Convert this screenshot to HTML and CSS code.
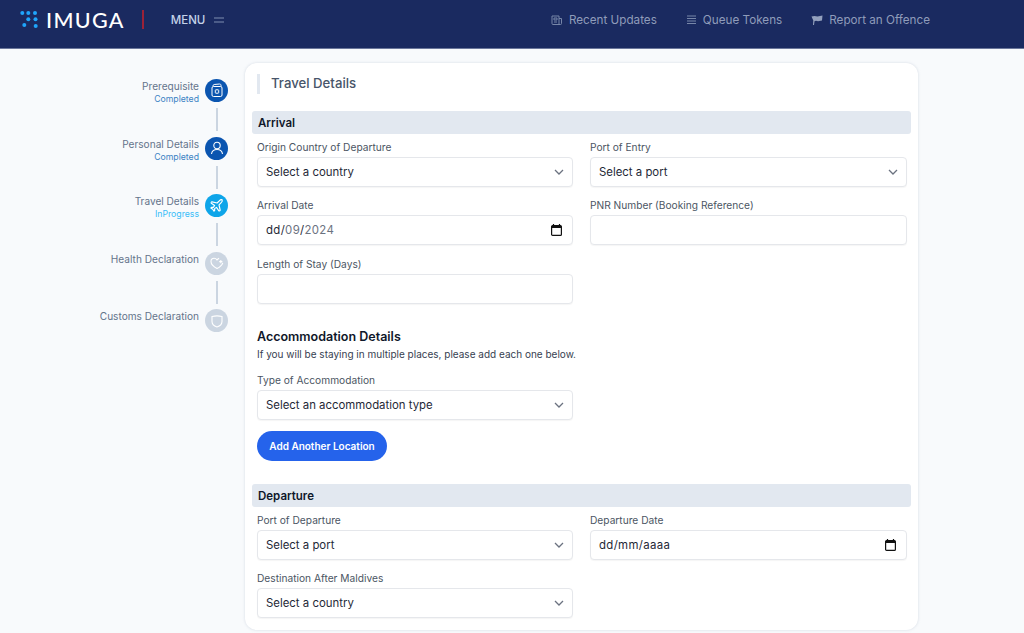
FILE: index.html
```html
<!DOCTYPE html>
<html lang="en">
<head>
    <meta charset="UTF-8">
    <title>IMUGA - Travel Details</title>
    <link rel="stylesheet" href="styles.css">
</head>
<body>
    <header class="topbar">
        <div class="brand">
            <svg class="brand-dots" width="20" height="18" viewBox="0 0 20 18">
                <g fill="#1fa5fb">
                    <circle cx="2.300" cy="2" r="2"/><circle cx="8.300" cy="2" r="2"/><circle cx="15" cy="2" r="2"/>
                    <circle cx="8.300" cy="8.300" r="2"/><circle cx="15.500" cy="8.300" r="2"/>
                    <circle cx="4.300" cy="14" r="2"/><circle cx="15.700" cy="15" r="2"/>
                </g>
            </svg>
            <span class="brand-name">IMUGA</span>
        </div>
        <div class="brand-line"></div>
        <div class="menu-btn">
            <span>MENU</span>
            <svg width="10" height="6" viewBox="0 0 10 6"><path d="M0 1h10M0 5h10" stroke="#7f8db0" stroke-width="1.200"/></svg>
        </div>
        <nav class="top-links">
            <a href="#">
                <svg width="12" height="12" viewBox="0 0 12 12" fill="none" stroke="#7786a8"><path d="M1 2h7v8.500H2a1 1 0 0 1-1-1zM8 4.500h2.500v5a1 1 0 0 1-1 1H8M3 4h3v2H3zM3 8h3"/></svg>
                Recent Updates
            </a>
            <a href="#">
                <svg width="11" height="12" viewBox="0 0 11 12" fill="none" stroke="#7786a8"><path d="M1 2h9M1 4.500h9M1 7h9M1 9.500h9"/></svg>
                Queue Tokens
            </a>
            <a href="#">
                <svg width="12" height="12" viewBox="0 0 12 12" fill="#93a0bd"><path d="M.5 2.500l3-.5 3 .5 5-1-.5 5-4 .8-2-.5-1.500.5L3 11H2L2.300 6.500z"/></svg>
                Report an Offence
            </a>
        </nav>
    </header>

    <main class="page">
        <aside class="steps">
            <div class="step done">
                <div class="step-text"><div class="step-name">Prerequisite</div><div class="step-status">Completed</div></div>
                <div class="step-icon">
                    <svg width="14" height="15" viewBox="0 0 14 15" fill="none" stroke="#fff" stroke-width="1"><path d="M3 3.500V2.800c0-.7.500-1.200 1.200-1.300L9.500 1c.8-.1 1.500.5 1.500 1.300v1.200"/><rect x="2" y="3.500" width="10" height="10" rx="1.500"/><rect x="5.300" y="6.800" width="3.400" height="3.400" rx=".6"/></svg>
                </div>
            </div>
            <div class="step-line"></div>
            <div class="step done">
                <div class="step-text"><div class="step-name">Personal Details</div><div class="step-status">Completed</div></div>
                <div class="step-icon">
                    <svg width="14" height="14" viewBox="0 0 14 14" fill="none" stroke="#fff" stroke-width="1.100"><circle cx="7" cy="4.500" r="3.200"/><path d="M1.500 13c.4-3 2.500-4.500 5.500-4.500s5.100 1.500 5.500 4.500"/></svg>
                </div>
            </div>
            <div class="step-line"></div>
            <div class="step current">
                <div class="step-text"><div class="step-name">Travel Details</div><div class="step-status">InProgress</div></div>
                <div class="step-icon">
                    <svg width="15" height="15" viewBox="0 0 24 24" fill="none" stroke="#fff" stroke-width="1.900" stroke-linejoin="round"><path d="M17.800 19.200 16 11l3.500-3.500C21 6 21.500 4 21 3c-1-.5-3 0-4.500 1.500L13 8 4.800 6.200c-.5-.1-.9.1-1.100.5l-.3.5c-.2.500-.1 1 .3 1.300L9 12l-2 3H4l-1 1 3 2 2 3 1-1v-3l3-2 3.500 5.300c.3.400.8.500 1.300.3l.5-.2c.4-.3.6-.7.5-1.200z"/></svg>
                </div>
            </div>
            <div class="step-line"></div>
            <div class="step">
                <div class="step-text"><div class="step-name">Health Declaration</div></div>
                <div class="step-icon">
                    <svg width="14" height="14" viewBox="0 0 14 14" fill="none" stroke="#fff" stroke-width="1.100"><path d="M12.800 6.800C12 9.200 9.900 11 7 12.500 3.600 10.700 1 8.500 1 5.500 1 3.700 2.400 2.300 4.100 2.300c1.200 0 2.200.6 2.900 1.700.5-.8 1.200-1.400 2.100-1.600M10.800 4v3.200M9.200 5.600h3.200"/></svg>
                </div>
            </div>
            <div class="step-line"></div>
            <div class="step">
                <div class="step-text"><div class="step-name">Customs Declaration</div></div>
                <div class="step-icon">
                    <svg width="14" height="14" viewBox="0 0 14 14" fill="none" stroke="#fff" stroke-width="1.100"><path d="M2 2.500c3.300-.8 6.700-.8 10 0v5c0 2.800-2.200 4.600-5 5.500-2.800-.9-5-2.700-5-5.500z"/></svg>
                </div>
            </div>
        </aside>

        <section class="card">
            <h1 class="card-title">Travel Details</h1>

            <h2 class="section-bar">Arrival</h2>
            <div class="form-grid">
                <div class="field">
                    <label>Origin Country of Departure</label>
                    <div class="select-box"><span>Select a country</span><svg class="chev" width="10" height="6" viewBox="0 0 10 6"><path d="M1 1l4 4 4-4" fill="none" stroke="#6b7280" stroke-width="1.300"/></svg></div>
                </div>
                <div class="field">
                    <label>Port of Entry</label>
                    <div class="select-box"><span>Select a port</span><svg class="chev" width="10" height="6" viewBox="0 0 10 6"><path d="M1 1l4 4 4-4" fill="none" stroke="#6b7280" stroke-width="1.300"/></svg></div>
                </div>
                <div class="field">
                    <label>Arrival Date</label>
                    <div class="select-box date"><span>dd/<em>09</em>/<em>2024</em></span><svg class="cal" width="11" height="12" viewBox="0 0 11 12"><path d="M2.500 0v2M8.500 0v2" stroke="#111" stroke-width="1.200"/><rect x=".6" y="1.600" width="9.800" height="9.800" rx="1" fill="none" stroke="#111" stroke-width="1.200"/><rect x="1" y="1.500" width="9" height="2.500" fill="#111"/></svg></div>
                </div>
                <div class="field">
                    <label>PNR Number (Booking Reference)</label>
                    <input class="text-box" type="text">
                </div>
                <div class="field">
                    <label>Length of Stay (Days)</label>
                    <input class="text-box" type="text">
                </div>
            </div>

            <div class="accom">
                <h3>Accommodation Details</h3>
                <p>If you will be staying in multiple places, please add each one below.</p>
                <div class="form-grid">
                    <div class="field">
                        <label>Type of Accommodation</label>
                        <div class="select-box"><span>Select an accommodation type</span><svg class="chev" width="10" height="6" viewBox="0 0 10 6"><path d="M1 1l4 4 4-4" fill="none" stroke="#6b7280" stroke-width="1.300"/></svg></div>
                    </div>
                </div>
                <button class="add-btn" type="button">Add Another Location</button>
            </div>

            <h2 class="section-bar">Departure</h2>
            <div class="form-grid">
                <div class="field">
                    <label>Port of Departure</label>
                    <div class="select-box"><span>Select a port</span><svg class="chev" width="10" height="6" viewBox="0 0 10 6"><path d="M1 1l4 4 4-4" fill="none" stroke="#6b7280" stroke-width="1.300"/></svg></div>
                </div>
                <div class="field">
                    <label>Departure Date</label>
                    <div class="select-box date"><span>dd/mm/aaaa</span><svg class="cal" width="11" height="12" viewBox="0 0 11 12"><path d="M2.500 0v2M8.500 0v2" stroke="#111" stroke-width="1.200"/><rect x=".6" y="1.600" width="9.800" height="9.800" rx="1" fill="none" stroke="#111" stroke-width="1.200"/><rect x="1" y="1.500" width="9" height="2.500" fill="#111"/></svg></div>
                </div>
                <div class="field">
                    <label>Destination After Maldives</label>
                    <div class="select-box"><span>Select a country</span><svg class="chev" width="10" height="6" viewBox="0 0 10 6"><path d="M1 1l4 4 4-4" fill="none" stroke="#6b7280" stroke-width="1.300"/></svg></div>
                </div>
            </div>
        </section>
    </main>
</body>
</html>
```

FILE: styles.css
```css
* {
    box-sizing: border-box;
}
body, html {
    margin: 0;
    padding: 0;
    height: 100%;
    background-color: #f8fafc;
    font-family: 'Inter', sans-serif;
    overflow: hidden;
}

/* top bar */
.topbar {
    display: flex;
    align-items: center;
    height: 49px;
    padding: 0 94px 9px 20px;
    background-color: #1a2a60;
    border-bottom: 1px solid #6b779b;
}
.brand {
    display: flex;
    align-items: center;
    gap: 6px;
}
.brand-name {
    font-family: 'Lato', sans-serif;
    font-size: 21.500px;
    font-weight: 500;
    letter-spacing: 1.3px;
    color: #fff;
}
.brand-line {
    width: 2px;
    height: 19px;
    margin-left: 17px;
    background-color: #9b2238;
}
.menu-btn {
    display: flex;
    align-items: center;
    gap: 9px;
    margin-left: 27px;
    font-size: 11.500px;
    font-weight: 500;
    color: #c4d2e8;
}
.top-links {
    display: flex;
    align-items: center;
    gap: 29px;
    margin-left: auto;
}
.top-links a {
    display: flex;
    align-items: center;
    gap: 6px;
    font-size: 11.700px;
    color: #8f9cba;
    text-decoration: none;
}

/* page */
.page {
    display: flex;
    align-items: flex-start;
    padding: 14px 106px 0 0;
}
.steps {
    display: flex;
    flex-direction: column;
    align-items: flex-end;
    width: 228px;
    margin-right: 17px;
    padding-top: 16px;
}
.step {
    display: flex;
    align-items: flex-start;
    gap: 6px;
    height: 23px;
}
.step-text {
    text-align: right;
    padding-top: 1px;
}
.step-name {
    font-size: 10.100px;
    line-height: 13px;
    color: #64748b;
}
.step-status {
    font-size: 8.700px;
    line-height: 12px;
    color: #3b82c4;
}
.step-icon {
    display: flex;
    align-items: center;
    justify-content: center;
    width: 23px;
    height: 23px;
    border-radius: 50%;
    background-color: #cbd5e1;
}
.step.done .step-icon {
    background-color: #0b55b0;
}
.step.current .step-icon {
    background-color: #0ea5e9;
}
.step.current .step-status {
    color: #38bdf8;
}
.step-line {
    width: 2px;
    height: 23px;
    margin: 6px 10.500px 5.500px 0;
    background-color: #cbd5e1;
}

/* card */
.card {
    flex: 1;
    height: 567px;
    padding: 11px 7px 0;
    background-color: #fff;
    border-radius: 12px;
    box-shadow: 0 0 3px rgba(148, 163, 184, 0.35);
}
.card-title {
    margin: 0 0 17px 5px;
    padding: 0 0 0 11px;
    height: 20px;
    line-height: 19px;
    border-left: 3px solid #e2e8f0;
    font-size: 13.200px;
    font-weight: 500;
    color: #475569;
}
.section-bar {
    margin: 0;
    padding: 0 6px;
    height: 23px;
    line-height: 24px;
    border-radius: 3px;
    background-color: #e2e8f0;
    font-size: 11.500px;
    font-weight: 600;
    color: #0f172a;
}
.form-grid {
    display: grid;
    grid-template-columns: 316px 317px;
    column-gap: 17px;
    row-gap: 11.500px;
    padding: 0 4px 0 5px;
}
.section-bar + .form-grid {
    margin-top: 5.900px;
}
.field label {
    display: block;
    height: 17px;
    line-height: 15px;
    font-size: 10.200px;
    font-weight: 400;
    color: #4b5563;
}
.select-box, .text-box {
    display: flex;
    align-items: center;
    justify-content: space-between;
    width: 100%;
    height: 30px;
    padding: 0 8px;
    background-color: #fff;
    border: 1px solid #e5e7eb;
    border-radius: 4px;
    box-shadow: 0 1px 1px rgba(0, 0, 0, 0.04);
    font-family: 'Inter', sans-serif;
    font-size: 11.400px;
    color: #1f2937;
}
.cal {
    margin-right: 2px;
}
.date span {
    letter-spacing: 0.35px;
}
.date em {
    font-style: normal;
    color: #6b7280;
}
.accom {
    margin-top: 24px;
    margin-bottom: 23px;
}
.accom h3 {
    margin: 0 0 0 5px;
    font-size: 12.500px;
    line-height: 17px;
    font-weight: 600;
    color: #0f172a;
}
.accom p {
    margin: 2px 0 12px 5px;
    font-size: 10px;
    line-height: 14px;
    color: #374151;
}
.accom .field {
    grid-column: 1;
}
.add-btn {
    display: block;
    margin: 11px 0 0 5px;
    width: 130px;
    height: 30px;
    border: 0;
    border-radius: 15px;
    background-color: #2563eb;
    color: #fff;
    font-family: 'Inter', sans-serif;
    font-size: 10px;
    font-weight: 600;
}
```
